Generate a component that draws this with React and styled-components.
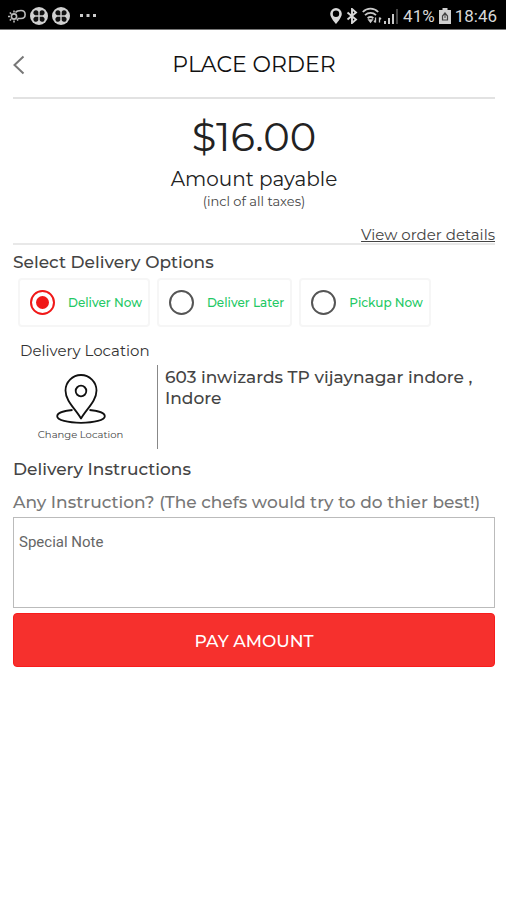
import { useState } from "react";
import styled, { createGlobalStyle } from "styled-components";

const GlobalStyle = createGlobalStyle`
  * {
    box-sizing: border-box;
  }

  body {
    margin: 0;
    background: #fff;
    color: #444;
    font-family: Montserrat, Inter, "Liberation Sans", sans-serif;
  }

  button,
  input,
  textarea {
    font: inherit;
    margin: 0;
  }
`;

const StatusBar = styled.div`
  display: flex;
  align-items: center;
  justify-content: space-between;
  height: 30px;
  padding: 2px 9px 0 8px;
  background: #000;
  color: #d8d8d8;
  border-bottom: 1px solid #777;
  font-family: Roboto, sans-serif;
  font-size: 17px;
`;

const StatusGroup = styled.div`
  display: flex;
  align-items: center;
  gap: ${({ $gap }) => $gap || 4}px;

  svg {
    display: block;
  }
`;

const Page = styled.main`
  padding: 0 11px 0 13px;
`;

const Header = styled.header`
  display: grid;
  grid-template-columns: 24px 1fr 24px;
  align-items: center;
  height: 69px;
  padding-top: 3px;
  border-bottom: 2px solid #e2e2e2;
`;

const BackButton = styled.button`
  display: flex;
  padding: 0;
  border: none;
  background: none;
  cursor: pointer;
`;

const Title = styled.h1`
  margin: 0;
  color: #111;
  font-size: 22px;
  font-weight: 400;
  line-height: 28px;
  text-align: center;
`;

const Summary = styled.section`
  display: flex;
  flex-direction: column;
  align-items: center;
  padding-top: 14px;
  border-bottom: 2px solid #e8e8e8;
`;

const Price = styled.div`
  color: #222;
  font-size: 40px;
  line-height: 48px;
`;

const Payable = styled.div`
  padding-top: 4px;
  color: #222;
  font-size: 20px;
  line-height: 28px;
`;

const TaxNote = styled.div`
  color: #444;
  font-size: 13px;
  line-height: 16px;
`;

const DetailsLink = styled.a`
  align-self: flex-end;
  margin-top: 18px;
  color: #444;
  font-size: 15px;
  line-height: 16px;
`;

const SectionTitle = styled.h2`
  margin: 0;
  padding: ${({ $inset }) => ($inset ? "0 7px" : "0")};
  color: ${({ $inset }) => ($inset ? "#333" : "#444")};
  font-size: ${({ $inset }) => ($inset ? 15 : 17)}px;
  font-weight: ${({ $inset }) => ($inset ? 400 : 500)};
  line-height: 24px;
`;

const DeliveryOptions = styled.section`
  padding-top: 5px;
`;

const Options = styled.div`
  display: flex;
  gap: 7px;
  padding: 4px 5px 12px;
`;

const Option = styled.label`
  display: flex;
  align-items: center;
  gap: 13px;
  height: 49px;
  padding: 0 6px 0 10px;
  border: 2px solid #f6f6f6;
  border-radius: 4px;
  color: #23c864;
  font-size: 12px;
  font-weight: 500;
  white-space: nowrap;
  cursor: pointer;
`;

const Radio = styled.input`
  appearance: none;
  display: grid;
  place-items: center;
  width: 25px;
  height: 25px;
  border: 2px solid #555;
  border-radius: 50%;

  &:checked {
    border-color: #f01818;
  }

  &:checked::before {
    content: "";
    width: 13px;
    height: 13px;
    border-radius: 50%;
    background: #f01818;
  }
`;

const Location = styled.section`
  display: flex;
  margin-top: 2px;
`;

const ChangeButton = styled.button`
  display: flex;
  flex-direction: column;
  align-items: center;
  justify-content: center;
  gap: 3px;
  width: 145px;
  height: 84px;
  padding: 3px 9px 0 0;
  border: none;
  border-right: 1px solid #888;
  background: none;
  color: #444;
  font-size: 10px;
  line-height: 16px;
  cursor: pointer;
`;

const Address = styled.p`
  flex: 1;
  margin: 0;
  padding: 2px 7px;
  font-size: 17px;
  font-weight: 500;
  line-height: 21px;
`;

const Instructions = styled.section`
  display: flex;
  flex-direction: column;
  padding-top: 8px;
`;

const Hint = styled.label`
  padding: 9px 0 3px;
  color: #777;
  font-size: 17px;
  font-weight: 500;
  line-height: 24px;
`;

const Note = styled.textarea`
  display: block;
  width: 100%;
  height: 91px;
  padding: 14px 5px;
  border: 1px solid #bbb;
  border-radius: 0;
  resize: none;
  font-family: Roboto, sans-serif;
  font-size: 15px;
  line-height: 20px;

  &::placeholder {
    color: #666;
    opacity: 1;
  }
`;

const PayButton = styled.button`
  height: 54px;
  margin-top: 5px;
  padding: 2px 0 0;
  border: 1px solid #f81c1c;
  border-radius: 4px;
  background: #f6302d;
  color: #fff;
  font-size: 17px;
  font-weight: 500;
  cursor: pointer;
`;

const options = ["Deliver Now", "Deliver Later", "Pickup Now"];

function WeatherIcon() {
  return (
    <svg width="18" height="16" viewBox="0 0 18 16" fill="none" stroke="#bbb" strokeWidth="1.6">
      <circle cx="6" cy="8.5" r="2.6" />
      <path d="M6 2.5v2M6 12.500v2M0 8.500h2M1.800 4.500l1.400 1.400M1.800 12.500l1.400-1.400M10.200 12.500l-1.400-1.400" />
      <path d="M7.500 4.500C9 2.500 11 2.500 13 2.500c5.500 0 5.500 8 0 8H9.500" />
    </svg>
  );
}

function CloverIcon() {
  return (
    <svg width="18" height="18" viewBox="0 0 18 18">
      <circle cx="9" cy="9" r="9" fill="#d0d0d0" />
      <g fill="#111">
        <path d="M8.300 8.300H5.200A2.600 2.600 0 1 1 8.300 4.700z" />
        <path d="M9.700 8.300h3.100A2.600 2.600 0 1 0 9.700 4.700z" />
        <path d="M8.300 9.700H5.200A2.600 2.600 0 1 0 8.300 13.300z" />
        <path d="M9.700 9.700h3.100A2.600 2.600 0 1 1 9.700 13.300z" />
      </g>
    </svg>
  );
}

function DotsIcon() {
  return (
    <svg width="18" height="4" viewBox="0 0 18 4" fill="#ccc">
      <rect x="0" width="3" height="3" />
      <rect x="6.5" width="3" height="3" />
      <rect x="13" width="3" height="3" />
    </svg>
  );
}

function PlaceIcon() {
  return (
    <svg width="12" height="16" viewBox="0 0 12 16" fill="#d8d8d8">
      <path
        fillRule="evenodd"
        d="M6 0a5.8 5.8 0 0 0-5.8 5.8C.2 10 6 16 6 16s5.8-6 5.8-10.2A5.8 5.8 0 0 0 6 0zm0 2.600a3.200 3.200 0 1 1 0 6.400A3.200 3.200 0 0 1 6 2.600z"
      />
    </svg>
  );
}

function BluetoothIcon() {
  return (
    <svg width="12" height="16" viewBox="0 0 12 16" fill="none" stroke="#d8d8d8" strokeWidth="1.9">
      <path d="M1.5 4.500l8.500 7-4 3.500V1l4 3.500-8.500 7" />
    </svg>
  );
}

function WifiIcon() {
  return (
    <svg width="20" height="17" viewBox="0 0 20 17" fill="none" stroke="#c8c8c8" strokeWidth="1.8">
      <path d="M.8 5C5 .6 12 .6 16.200 5M3 8.200c3.200-3 7.800-3 11 0M5.600 11.200c2-1.700 3.800-1.700 5.800 0" />
      <path d="M7.300 13.200l1.200 1.500 1.200-1.500z" fill="#c8c8c8" />
      <path d="M13.500 10.500v5M12 13.800l1.500 1.700M17.500 15.500v-5M19 12.200l-1.500-1.700" strokeWidth="1.3" />
    </svg>
  );
}

function SignalIcon() {
  return (
    <svg width="15" height="16" viewBox="0 0 15 16" fill="#c8c8c8">
      <rect x="0" y="13" width="2" height="3" />
      <rect x="4" y="10" width="2" height="6" />
      <rect x="8" y="6" width="2" height="10" />
      <rect x="12" y="1" width="2" height="15" fill="#444" />
    </svg>
  );
}

function BatteryIcon() {
  return (
    <svg width="12" height="16" viewBox="0 0 12 16">
      <path d="M3.5 0h5v2H12v14H0V2h3.5z" fill="#d0d0d0" />
      <path d="M6 5L3.500 8v4h5V8z" fill="none" stroke="#444" strokeWidth="1.2" />
      <path d="M6 7v3" stroke="#444" />
    </svg>
  );
}

function BackIcon() {
  return (
    <svg width="14" height="20" viewBox="0 0 14 20" fill="none" stroke="#777" strokeWidth="2">
      <path d="M10.500 1.500L1.500 10l9 8.500" />
    </svg>
  );
}

function MapPinIcon() {
  return (
    <svg width="50" height="50" viewBox="0 0 50 50" fill="none" stroke="#111" strokeWidth="1.8">
      <path
        d="M25 44.500C19.500 35 9.500 27 9.500 16.500a15.500 15.500 0 0 1 31 0C40.500 27 30.500 35 25 44.500z"
        strokeLinejoin="round"
      />
      <circle cx="25" cy="17" r="5.3" />
      <path d="M16.500 36C8 36.700 1.200 39 1.200 42.300c0 3.800 10.500 6.500 23.800 6.500s23.800-2.700 23.800-6.500c0-3.300-6.800-5.600-15.300-6.300" />
    </svg>
  );
}

export default function App() {
  const [selected, setSelected] = useState("Deliver Now");
  const [note, setNote] = useState("");

  return (
    <>
      <GlobalStyle />
      <StatusBar>
        <StatusGroup $gap={10}>
          <StatusGroup>
            <WeatherIcon />
            <CloverIcon />
            <CloverIcon />
          </StatusGroup>
          <DotsIcon />
        </StatusGroup>
        <StatusGroup>
          <PlaceIcon />
          <BluetoothIcon />
          <StatusGroup $gap={2}>
            <WifiIcon />
            <SignalIcon />
          </StatusGroup>
          <span>41%</span>
          <BatteryIcon />
          <span>18:46</span>
        </StatusGroup>
      </StatusBar>

      <Page>
        <Header>
          <BackButton type="button" aria-label="Back">
            <BackIcon />
          </BackButton>
          <Title>PLACE ORDER</Title>
        </Header>

        <Summary>
          <Price>$16.00</Price>
          <Payable>Amount payable</Payable>
          <TaxNote>(incl of all taxes)</TaxNote>
          <DetailsLink href="#details">View order details</DetailsLink>
        </Summary>

        <DeliveryOptions>
          <SectionTitle>Select Delivery Options</SectionTitle>
          <Options>
            {options.map((option) => (
              <Option key={option}>
                <Radio
                  type="radio"
                  name="delivery"
                  checked={selected === option}
                  onChange={() => setSelected(option)}
                />
                {option}
              </Option>
            ))}
          </Options>
        </DeliveryOptions>

        <SectionTitle $inset>Delivery Location</SectionTitle>
        <Location>
          <ChangeButton type="button">
            <MapPinIcon />
            Change Location
          </ChangeButton>
          <Address>603 inwizards TP vijaynagar indore , Indore</Address>
        </Location>

        <Instructions>
          <SectionTitle>Delivery Instructions</SectionTitle>
          <Hint htmlFor="note">Any Instruction? (The chefs would try to do thier best!)</Hint>
          <Note
            id="note"
            placeholder="Special Note"
            value={note}
            onChange={(e) => setNote(e.target.value)}
          />
          <PayButton type="button">PAY AMOUNT</PayButton>
        </Instructions>
      </Page>
    </>
  );
}
